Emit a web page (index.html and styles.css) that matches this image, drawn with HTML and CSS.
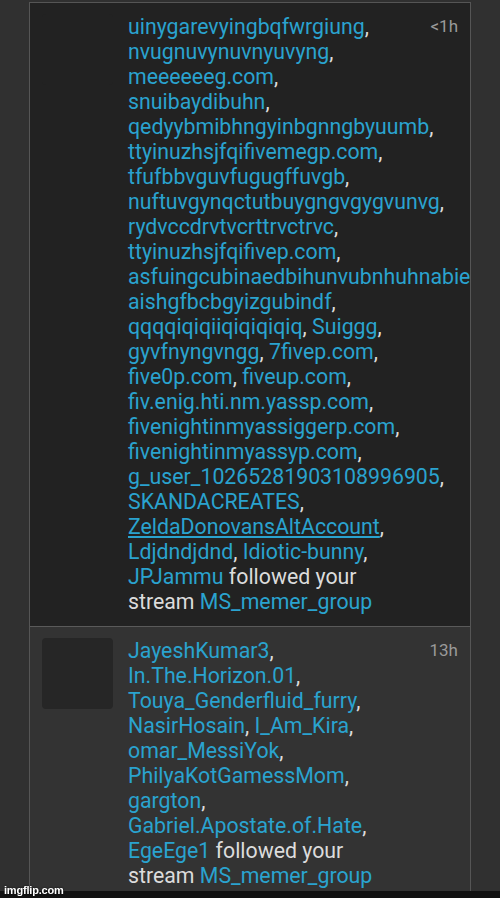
FILE: index.html
```html
<!DOCTYPE html>
<html>
<head>
<meta charset="utf-8">
<link rel="stylesheet" href="styles.css">
</head>
<body>
<div class="card">
  <div class="item item-new">
    <div class="avatar avatar-new"></div>
    <div class="body">
      <a>uinygarevyingbqfwrgiung</a>, <a>nvugnuvynuvnyuvyng</a>, <a>meeeeeeg.com</a>, <a>snuibaydibuhn</a>, <a>qedyybmibhngyinbgnngbyuumb</a>, <a>ttyinuzhsjfqifivemegp.com</a>, <a>tfufbbvguvfugugffuvgb</a>, <a>nuftuvgynqctutbuygngvgygvunvg</a>, <a>rydvccdrvtvcrttrvctrvc</a>, <a>ttyinuzhsjfqifivep.com</a>, <a>asfuingcubinaedbihunvubnhuhnabiesf</a>, <a>aishgfbcbgyizgubindf</a>, <a>qqqqiqiqiiqiqiqiqiq</a>, <a>Suiggg</a>, <a>gyvfnyngvngg</a>, <a>7fivep.com</a>, <a>five0p.com</a>, <a>fiveup.com</a>, <a>fiv.enig.hti.nm.yassp.com</a>, <a>fivenightinmyassiggerp.com</a>, <a>fivenightinmyassyp.com</a>, <a>g_user_10265281903108996905</a>, <a>SKANDACREATES</a>, <a class="hover">ZeldaDonovansAltAccount</a>, <a>Ldjdndjdnd</a>, <a>Idiotic-bunny</a>, <a>JPJammu</a> followed your stream <a>MS_memer_group</a>
    </div>
    <div class="time">&lt;1h</div>
  </div>
  <div class="item">
    <div class="avatar"></div>
    <div class="body">
      <a>JayeshKumar3</a>, <a>In.The.Horizon.01</a>, <a>Touya_Genderfluid_furry</a>, <a>NasirHosain</a>, <a>I_Am_Kira</a>, <a>omar_MessiYok</a>, <a>PhilyaKotGamessMom</a>, <a>gargton</a>, <a>Gabriel.Apostate.of.Hate</a>, <a>EgeEge1</a> followed your <span class="nw">stream <a>MS_memer_group</a></span>
    </div>
    <div class="time">13h</div>
  </div>
</div>
<div class="bar"></div>
<div class="watermark">imgflip.com</div>
</body>
</html>
```
FILE: styles.css
```css
html, body {
  margin: 0;
  padding: 0;
  background: #303030;
  height: 100%;
  overflow: hidden;
}
body {
  font-family: Roboto, "Noto Sans", sans-serif;
  font-size: 21.3px;
  line-height: 25px;
  color: #dcdcdc;
}
.card {
  margin: 2px 0 0 29px;
  width: 440px;
  border: 1px solid #555;
  border-bottom: none;
  overflow: hidden;
}
.item {
  display: flex;
  align-items: flex-start;
  padding: 11px 12px 12px 12px;
  background: #333;
}
.item-new {
  background: #222;
  border-bottom: 1px solid #5a5a5a;
}
.avatar {
  flex: 0 0 71px;
  height: 71px;
  border-radius: 4px;
  background: #262626;
  margin-right: 15px;
}
.avatar-new {
  background: #222;
}
.body {
  flex: 1;
  min-width: 0;
}
.body a {
  color: #2aa3cf;
  text-decoration: none;
}
.body a.hover {
  text-decoration: underline;
}
.nw {
  white-space: nowrap;
}
.time {
  flex: 0 0 40px;
  margin-left: 8px;
  text-align: right;
  color: #9a9a9a;
  font-size: 17px;
}
.bar {
  position: fixed;
  left: 0;
  right: 0;
  bottom: 0;
  height: 7px;
  background: #111;
}
.watermark {
  position: fixed;
  left: 4px;
  bottom: 2px;
  color: #fff;
  font-family: "Liberation Sans", Arial, sans-serif;
  font-weight: bold;
  font-size: 11px;
  line-height: 12px;
  letter-spacing: -0.2px;
  text-shadow: 0 0 2px #000;
}
```
